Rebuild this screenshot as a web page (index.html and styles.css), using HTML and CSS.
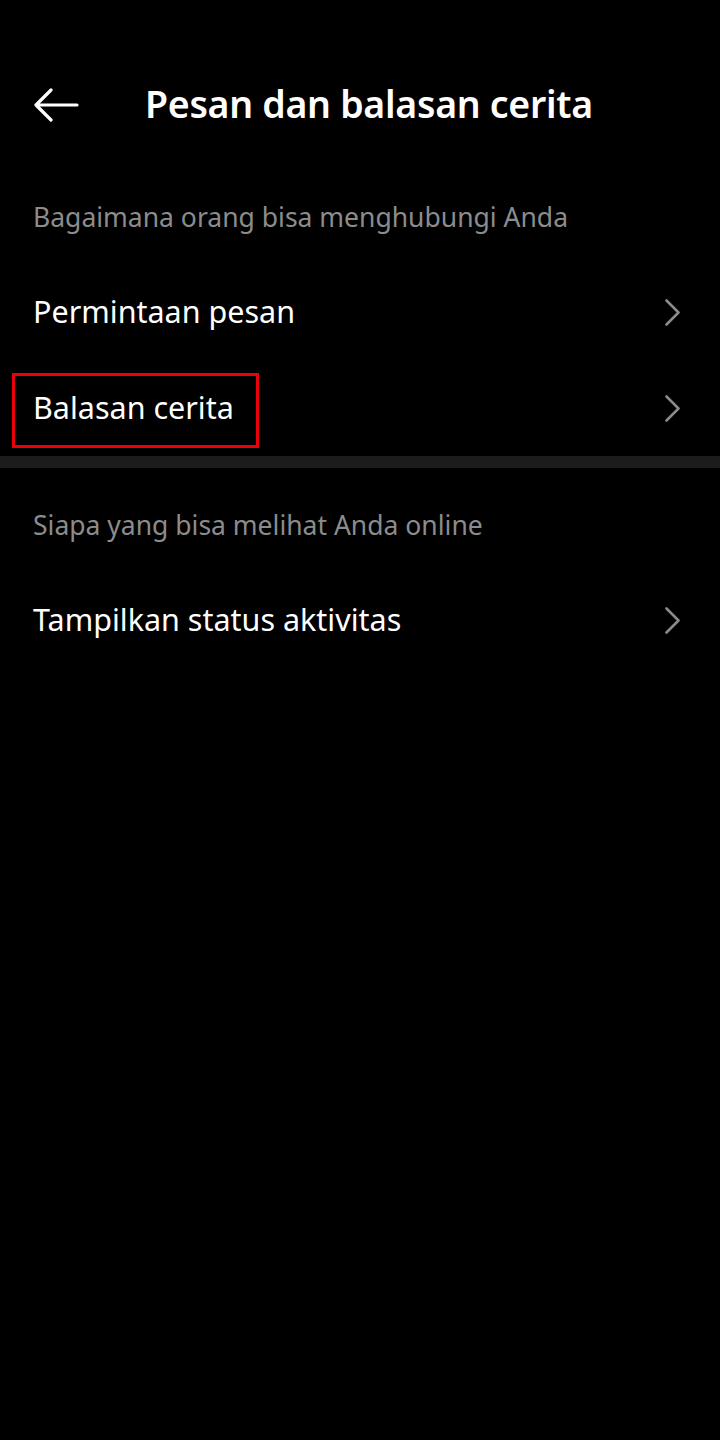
FILE: index.html
```html
<!DOCTYPE html>
<html lang="id">
	<head>
		<title>Pesan dan balasan cerita</title>
		<meta charset="utf-8">
		<link rel="stylesheet" href="styles.css">
	</head>
	<body>
		<div class="top">
			<svg class="back" width="46" height="34" viewBox="0 0 46 34">
				<path d="M44 17 H3 M18 2 L3 17 L18 32" fill="none" stroke="#fff" stroke-width="3.2" stroke-linecap="round" stroke-linejoin="round"/>
			</svg>
			<h1>Pesan dan balasan cerita</h1>
		</div>
		<div class="grp first">
			<p class="grp-title">Bagaimana orang bisa menghubungi Anda</p>
			<div class="row"><span class="lbl">Permintaan pesan</span><i class="chev"></i></div>
			<div class="row"><span class="lbl marked">Balasan cerita</span><i class="chev"></i></div>
		</div>
		<div class="sep"></div>
		<div class="grp second">
			<p class="grp-title">Siapa yang bisa melihat Anda online</p>
			<div class="row"><span class="lbl">Tampilkan status aktivitas</span><i class="chev"></i></div>
		</div>
	</body>
</html>
```
FILE: styles.css
```css
html, body {
	margin: 0;
	background-color: #000;
	color: #fff;
	font-family: 'Noto Sans', 'Open Sans', sans-serif;
}
.top {
	margin-top: 60px;
	height: 90px;
	display: flex;
	align-items: center;
	padding-left: 33px;
}
.back {
	display: block;
}
h1 {
	margin: -4px 0 0 66px;
	font-size: 37.5px;
	font-weight: 600;
	letter-spacing: -0.3px;
}
.grp.first {
	padding-top: 20px;
}
.grp.second {
	padding-top: 10px;
}
.grp-title {
	margin: 0;
	height: 94px;
	line-height: 94px;
	padding-left: 33px;
	font-size: 26.5px;
	color: #8c8c8c;
}
.row {
	height: 96px;
	display: flex;
	align-items: center;
	justify-content: space-between;
	padding: 0 40px 0 33px;
}
.lbl {
	font-size: 30.5px;
	line-height: 40px;
	margin-top: -2px;
	position: relative;
}
.marked::after {
	content: '';
	position: absolute;
	left: -21px;
	right: -25px;
	top: -14px;
	bottom: -21px;
	border: 3px solid #e8000b;
}
.chev {
	width: 15px;
	height: 27px;
	background: no-repeat center/15px 27px url("data:image/svg+xml,%3Csvg xmlns='http://www.w3.org/2000/svg' viewBox='0 0 15 27'%3E%3Cpath d='M1.5 1.5 L13.5 13.5 L1.5 25.5' fill='none' stroke='%238a8a8a' stroke-width='2.6' stroke-linecap='round' stroke-linejoin='round'/%3E%3C/svg%3E");
}
.sep {
	height: 12px;
	background-color: #1c1c1c;
}
```
